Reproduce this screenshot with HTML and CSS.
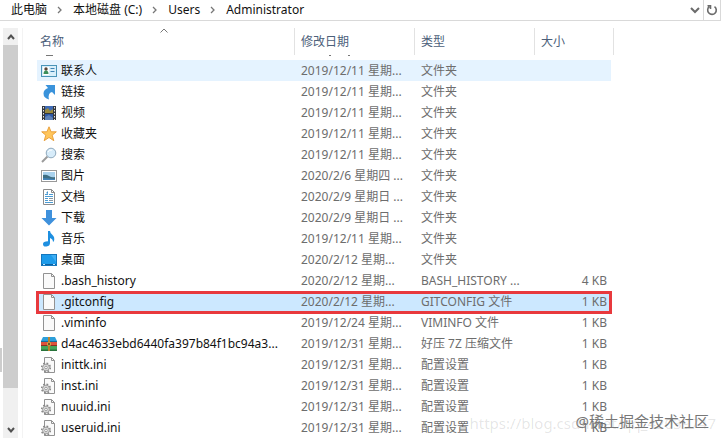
FILE: index.html
```
<!DOCTYPE html>
<html lang="zh-CN">
<head>
<meta charset="utf-8">
<title>Administrator</title>
<link rel="stylesheet" href="styles.css">
</head>
<body>
<svg class="defs" aria-hidden="true">
  <symbol id="contacts" viewBox="0 0 16 16"><rect x=".5" y="2.5" width="15" height="11" fill="#d9effa" stroke="#4a94b8"/><rect x="2" y="4" width="6" height="8" fill="#fff"/><circle cx="5" cy="6" r="1.7" fill="#5a4638"/><path d="M2.500 11q0-3.500 2.500-3.500T7.500 11z" fill="#3c8f5c"/><path d="M9.500 5.500h4M9.500 8.500h4" stroke="#3f83b5"/></symbol>
  <symbol id="link" viewBox="0 0 16 16"><path d="M4.500 1H14v10l-3-3Q6.500 9 8 15.500 2.500 14 2.500 9.500q0-4 4.500-5.500z" fill="#3a93db"/></symbol>
  <symbol id="video" viewBox="0 0 16 16"><path d="M1 1h14v14H1z" fill="#35383d"/><path d="M4 1h8v7H4z" fill="#3f6bb5"/><path d="M4 9h8v6H4z" fill="#2e59a8"/><path d="M4 5l3-2 2 3 3-2v4H4z" fill="#9a8a3d"/><path d="M4 12l4-2 4 3v2H4z" fill="#5f83b8"/><path d="M2.500 2v13M13.500 2v13" stroke="#e8e8e8" stroke-dasharray="1.500 1.500"/></symbol>
  <symbol id="star" viewBox="0 0 16 16"><path d="M8 .8l2.100 5h5.200l-4.100 3.400 1.600 5.500L8 11.500l-4.800 3.200 1.600-5.500L.7 5.800h5.200z" fill="#ffc65c" stroke="#e79b34" stroke-width=".9"/></symbol>
  <symbol id="search" viewBox="0 0 16 16"><path d="M6.500 9.500L1 15" stroke="#9b9b9b" stroke-width="2"/><circle cx="10" cy="6" r="4.800" fill="#d7ecfa" stroke="#8fa9bd"/><path d="M7 5q1-2.500 4-2" fill="none" stroke="#fff"/></symbol>
  <symbol id="picture" viewBox="0 0 16 16"><rect x=".5" y="2.500" width="15" height="11" fill="#fff" stroke="#999"/><path d="M2 4h12v8H2z" fill="#a9d2ee"/><path d="M2 7q3-1 6 1t6 1v3H2z" fill="#3e6e83"/><path d="M2 10l12 1v1H2z" fill="#4383b8"/></symbol>
  <symbol id="document" viewBox="0 0 16 16"><path d="M2.500.5h8l3 3v12h-11z" fill="#fff" stroke="#8b8b8b"/><path d="M10.500.5v3h3" fill="none" stroke="#8b8b8b"/><path d="M4 5.500h3M8 5.500h4M4 7.500h8M4 9.500h3M4 11.500h3M4 13.500h8" stroke="#4a9bd4"/><path d="M5 4l2-2v3z" fill="#3e91ce"/><path d="M8 9.500h4M8 11.500h4" stroke="#8a979f"/></symbol>
  <symbol id="download" viewBox="0 0 16 16"><path d="M5 0h6v8h4.500L8 15.500.5 8H5z" fill="#3f91dc"/></symbol>
  <symbol id="music" viewBox="0 0 16 16"><path d="M7 0h2q0 2 2.500 4t1.500 6l-1 1q0-3-3-4v5q0 3-3.500 3.500T2 13q0-2.500 5-2.700z" fill="#1e8fe0"/></symbol>
  <symbol id="desktop" viewBox="0 0 16 16"><rect x=".5" y="2.500" width="15" height="11" fill="#1d9bea" stroke="#1577bd"/><path d="M1 12.500h14" stroke="#0d609e"/><path d="M2 12.500h2M12 12.500h2" stroke="#bde5ff"/><path d="M10 3h5v7z" fill="#3eaff4"/></symbol>
  <symbol id="file" viewBox="0 0 16 16"><path d="M2.500.5h8l3 3v12h-11z" fill="#fafafa" stroke="#929292"/><path d="M10.500.5v3h3" fill="none" stroke="#929292"/></symbol>
  <symbol id="archive" viewBox="0 0 16 16"><path d="M2 1h12l2 4H0z" fill="#2d9fda"/><path d="M0 5h16v1H0z" fill="#176c9c"/><path d="M0 6h16v4H0z" fill="#df533b"/><path d="M0 9h16v1H0z" fill="#8e2e22"/><path d="M0 10h16v5H0z" fill="#46a65a"/><path d="M0 13.500h16V15H0z" fill="#28733b"/><path d="M7 1h2v14H7z" fill="#b98530"/><path d="M6 6.500h4v3H6z" fill="#d9a548"/><path d="M7 7h2v2H7z" fill="#715522"/></symbol>
  <symbol id="settings" viewBox="0 0 16 16"><path d="M3.500.5h7l3 3v12h-10z" fill="#fafafa" stroke="#929292"/><path d="M10.500.5v3h3" fill="none" stroke="#929292"/><circle cx="5" cy="10.500" r="4.300" fill="none" stroke="#888" stroke-width="1.600" stroke-dasharray="1.700 1.680"/><circle cx="5" cy="10.500" r="3.400" fill="#dcdcdc" stroke="#8b8b8b" stroke-width=".8"/><circle cx="5" cy="10.500" r="1.300" fill="#fff" stroke="#8b8b8b" stroke-width=".8"/></symbol>
</svg>
<header class="address">
  <nav class="crumbs" aria-label="路径">
    <a href="#">此电脑</a>
    <svg class="sep" viewBox="0 0 6 8"><path d="M1 1l3 3-3 3"/></svg>
    <a href="#">本地磁盘 (C:)</a>
    <svg class="sep" viewBox="0 0 6 8"><path d="M1 1l3 3-3 3"/></svg>
    <a href="#">Users</a>
    <svg class="sep" viewBox="0 0 6 8"><path d="M1 1l3 3-3 3"/></svg>
    <a href="#">Administrator</a>
  </nav>
  <button class="tool" aria-label="展开"><svg width="10" height="8" viewBox="0 0 10 8"><path d="M1 2l4 4 4-4"/></svg></button>
  <button class="tool refresh" aria-label="刷新"><svg width="12" height="12" viewBox="0 0 12 12"><path d="M8.500 2.600A4.300 4.300 0 1 1 3.300 2.700M1.500 1.700h3v3.200" /></svg></button>
</header>
<main class="window">
  <div class="edge"><div class="edge-thumb"></div></div>
  <div class="scrollbar">
    <button aria-label="向上滚动"><svg width="8" height="8" viewBox="0 0 8 8"><path d="M1 6l3-3.500L7 6"/></svg></button>
    <div class="thumb"></div>
    <button class="down" aria-label="向下滚动"><svg width="8" height="8" viewBox="0 0 8 8"><path d="M1 2l3 3.500L7 2"/></svg></button>
  </div>
  <div class="files">
    <table>
      <colgroup><col class="c-name"><col class="c-mid"><col class="c-mid"><col class="c-size"></colgroup>
      <thead><tr><th>名称<svg class="sort" viewBox="0 0 8 5"><path d="M.5 4.500L4 1l3.500 3.500"/></svg></th><th>修改日期</th><th>类型</th><th>大小</th></tr></thead>
      <tbody>
        <tr class="cut"><td><i class="bit"></i></td><td><i class="dot"></i><i class="dot"></i></td><td></td><td></td></tr>
        <tr class="hover"><td><svg class="icon"><use href="#contacts"/></svg>联系人</td><td>2019/12/11 星期...</td><td>文件夹</td><td></td></tr>
        <tr><td><svg class="icon"><use href="#link"/></svg>链接</td><td>2019/12/11 星期...</td><td>文件夹</td><td></td></tr>
        <tr><td><svg class="icon"><use href="#video"/></svg>视频</td><td>2019/12/11 星期...</td><td>文件夹</td><td></td></tr>
        <tr><td><svg class="icon"><use href="#star"/></svg>收藏夹</td><td>2019/12/11 星期...</td><td>文件夹</td><td></td></tr>
        <tr><td><svg class="icon"><use href="#search"/></svg>搜索</td><td>2019/12/11 星期...</td><td>文件夹</td><td></td></tr>
        <tr><td><svg class="icon"><use href="#picture"/></svg>图片</td><td>2020/2/6 星期四 ...</td><td>文件夹</td><td></td></tr>
        <tr><td><svg class="icon"><use href="#document"/></svg>文档</td><td>2020/2/9 星期日 ...</td><td>文件夹</td><td></td></tr>
        <tr><td><svg class="icon"><use href="#download"/></svg>下载</td><td>2020/2/9 星期日 ...</td><td>文件夹</td><td></td></tr>
        <tr><td><svg class="icon"><use href="#music"/></svg>音乐</td><td>2019/12/11 星期...</td><td>文件夹</td><td></td></tr>
        <tr><td><svg class="icon"><use href="#desktop"/></svg>桌面</td><td>2020/2/12 星期...</td><td>文件夹</td><td></td></tr>
        <tr><td><svg class="icon"><use href="#file"/></svg>.bash_history</td><td>2020/2/12 星期...</td><td>BASH_HISTORY ...</td><td>4 KB</td></tr>
        <tr class="selected"><td><svg class="icon"><use href="#file"/></svg>.gitconfig</td><td>2020/2/12 星期...</td><td>GITCONFIG 文件</td><td>1 KB</td></tr>
        <tr><td><svg class="icon"><use href="#file"/></svg>.viminfo</td><td>2019/12/24 星期...</td><td>VIMINFO 文件</td><td>1 KB</td></tr>
        <tr><td><svg class="icon"><use href="#archive"/></svg>d4ac4633ebd6440fa397b84f1bc94a3...</td><td>2019/12/31 星期...</td><td>好压 7Z 压缩文件</td><td>1 KB</td></tr>
        <tr><td><svg class="icon"><use href="#settings"/></svg>inittk.ini</td><td>2019/12/31 星期...</td><td>配置设置</td><td>1 KB</td></tr>
        <tr><td><svg class="icon"><use href="#settings"/></svg>inst.ini</td><td>2019/12/31 星期...</td><td>配置设置</td><td>1 KB</td></tr>
        <tr><td><svg class="icon"><use href="#settings"/></svg>nuuid.ini</td><td>2019/12/31 星期...</td><td>配置设置</td><td>1 KB</td></tr>
        <tr><td><svg class="icon"><use href="#settings"/></svg>useruid.ini</td><td>2019/12/31 星期...</td><td>配置设置</td><td>1 KB</td></tr>
      </tbody>
    </table>
  </div>
</main>
<div class="mark url">https://blog.csdn.net/qq_42039747</div>
<div class="mark site">@稀土掘金技术社区</div>
</body>
</html>
```
FILE: styles.css
```
* { box-sizing: border-box; }
body {
  margin: 0;
  min-height: 100vh;
  display: flex;
  flex-direction: column;
  overflow: hidden;
  background: #fff;
  color: #111;
  font: 12px/18px "Noto Sans", "Noto Sans CJK SC", sans-serif;
}
svg { fill: none; flex: none; }
button { border: 0; padding: 0; margin: 0; background: none; display: flex; align-items: center; justify-content: center; }
.defs { position: absolute; width: 0; height: 0; }

.address { display: flex; height: 21px; margin-right: 3px; border-bottom: 1px solid #d9d9d9; border-right: 1px solid #d9d9d9; }
.crumbs { flex: 1; display: flex; align-items: center; gap: 10px; padding-left: 11px; }
.crumbs a { color: #111; text-decoration: none; }
.sep { width: 6px; height: 8px; stroke: #777; stroke-width: 1.3; }
.tool { width: 16px; }
.tool svg { stroke: #6b6b6b; stroke-width: 2; }
.refresh { width: 17px; border-left: 1px solid #d9d9d9; }
.refresh svg { stroke-width: 1.6; }

.window { display: flex; flex: 1; padding: 7px 0 4px; }
.edge { width: 3px; display: flex; flex-direction: column; justify-content: flex-end; padding-bottom: 66px; }
.edge-thumb { width: 2px; height: 24px; background: #cdcdcd; }
.scrollbar { width: 15px; display: flex; flex-direction: column; background: #f0f0f0; }
.scrollbar button { height: 17px; }
.scrollbar svg { stroke: #505050; stroke-width: 2; }
.thumb { flex: 1; background: #cdcdcd; }
.scrollbar .down { margin-top: 33px; }
.files { flex: 1; margin-left: 4px; padding-left: 14px; border-left: 1px solid #f3f3f3; }

table { border-spacing: 0; table-layout: fixed; width: 577px; }
.c-mid { width: 120px; }
.c-size { width: 80px; }
th, td { padding: 0 0 0 7px; text-align: left; white-space: nowrap; font-weight: normal; }
th { position: relative; height: 27px; padding-left: 6px; border-left: 1px solid #e2e2e2; color: #4c607a; }
th:first-child { padding-left: 3px; border-left: 0; }
th:last-child { border-right: 1px solid #e2e2e2; }
.sort { position: absolute; top: 0; left: 48%; width: 8px; height: 5px; stroke: #777; }
td { height: 21px; line-height: 21px; color: #6d6d6d; }
td:first-child { padding-left: 4px; color: #111; }
td:last-child { padding-right: 4px; text-align: right; border-right: 3px solid transparent; background-clip: padding-box; }
.icon { width: 16px; height: 16px; margin: 0 4px 2px 0; vertical-align: middle; }
.cut td { height: 5px; line-height: 1px; vertical-align: top; }
.bit, .dot { float: left; height: 1px; background: #777; }
.bit { width: 7px; margin-left: 5px; }
.dot { width: 2px; margin-left: 28px; }
.dot + .dot { margin-left: 17px; }
.hover td { background-color: #e5f3ff; }
.selected { position: relative; }
.selected td { background-color: #cce8ff; }
.selected td:first-child::after { content: ""; position: absolute; inset: 0 2px -2px -1px; border: 3px solid #e8393d; }

.mark { position: absolute; white-space: nowrap; }
.url { right: 8px; bottom: 9px; font-size: 15px; line-height: 20px; color: #0000001c; }
.site { right: 15px; bottom: 9px; font-size: 15px; line-height: 24px; color: #777; }
```
